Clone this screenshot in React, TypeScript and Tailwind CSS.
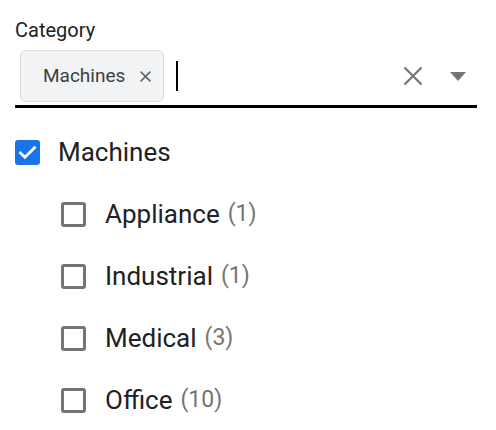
import React from 'react';

const items = [
  { label: 'Appliance', count: 1 },
  { label: 'Industrial', count: 1 },
  { label: 'Medical', count: 3 },
  { label: 'Office', count: 10 },
];

const CheckedBox = () => (
  <div className="w-[25px] h-[25px] rounded-[3px] bg-[#1a73e8] flex items-center justify-center">
    <svg width="21" height="21" viewBox="0 0 24 24" fill="none">
      <path d="M4 12.5l5 5L20 6.5" stroke="white" strokeWidth="3.2" strokeLinecap="square" />
    </svg>
  </div>
);

const EmptyBox = () => (
  <div className="w-[25px] h-[25px] rounded-[3px] border-[3px] border-[#757575] bg-white" />
);

export default function App() {
  return (
    <div className="w-[496px] h-[430px] bg-white overflow-hidden font-['Roboto',sans-serif] text-[#202124]">
      <div className="pl-[15px] pt-[19px] text-[20px] leading-[22px] text-[#202124]">Category</div>

      <div className="ml-[15px] mt-[9px] w-[462px] pl-[5px] pr-[11px] pb-[3px] flex items-center border-b-[3px] border-black">
        <div className="h-[52px] w-[144px] shrink-0 rounded-md border border-[#dadce0] bg-[#f1f3f4] flex items-center pl-[22px]">
          <span className="text-[19px] text-[#3c4043]">Machines</span>
          <svg className="ml-[14px]" width="13" height="13" viewBox="0 0 12 12" fill="none">
            <path d="M1.5 1.5l9 9M10.5 1.5l-9 9" stroke="#5f6368" strokeWidth="1.4" />
          </svg>
        </div>
        <div className="ml-[12px] w-[2px] h-[30px] bg-black" />
        <div className="flex-1" />
        <svg width="20" height="20" viewBox="0 0 20 20" fill="none">
          <path d="M1.5 1.5l17 17M18.5 1.5l-17 17" stroke="#757575" strokeWidth="2.2" />
        </svg>
        <svg className="ml-[27px]" width="16" height="9" viewBox="0 0 16 9">
          <path d="M0 0h16L8 9z" fill="#757575" />
        </svg>
      </div>

      <div className="mt-[13px]">
        <div className="h-[62px] pl-[15px] flex items-center">
          <CheckedBox />
          <span className="ml-[18px] text-[26px] text-[#202124]">Machines</span>
        </div>
        {items.map((it) => (
          <div key={it.label} className="h-[62px] pl-[61px] flex items-center">
            <EmptyBox />
            <span className="ml-[19px] text-[26px] text-[#202124]">{it.label}</span>
            <span className="ml-[8px] text-[23px] text-[#757575]">({it.count})</span>
          </div>
        ))}
      </div>
    </div>
  );
}
